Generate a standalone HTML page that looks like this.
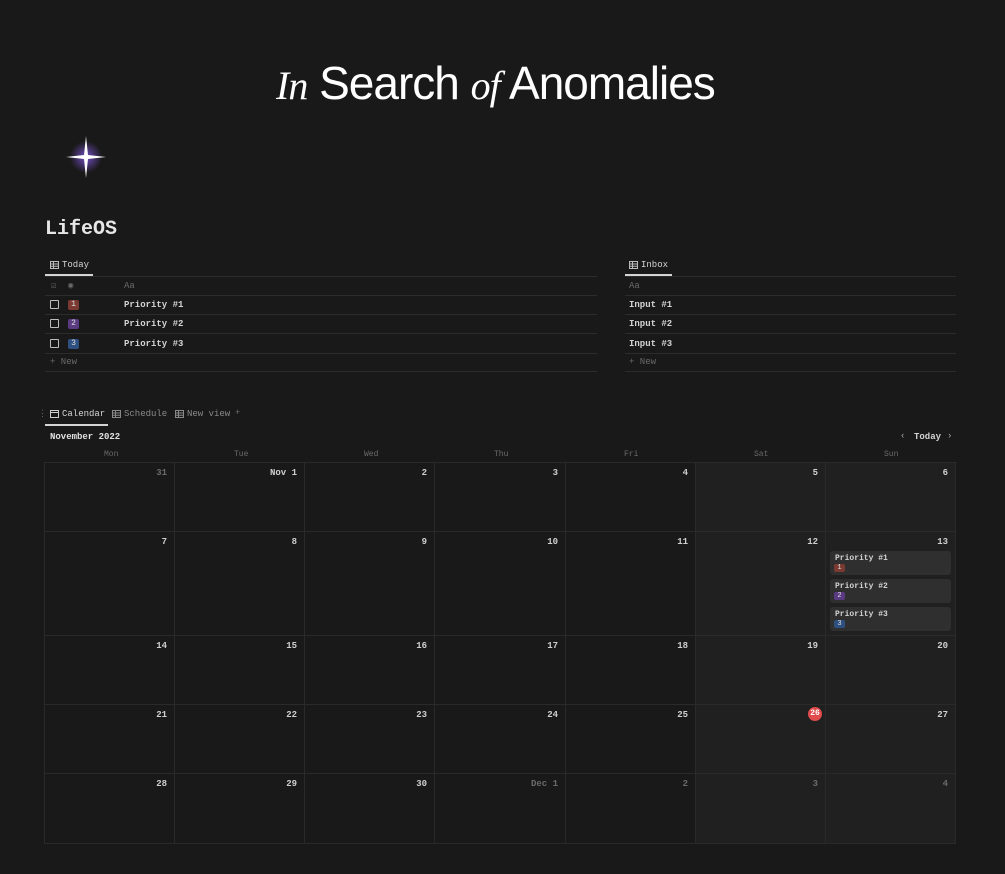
<!DOCTYPE html>
<html><head><meta charset="utf-8"><style>
*{margin:0;padding:0;box-sizing:border-box}
body{width:1005px;height:874px;background:#191919;position:relative;overflow:hidden;font-family:"Liberation Mono",monospace;color:#d4d4d4}
.a{position:absolute}
.t{position:absolute;font-size:9px;white-space:nowrap}
.b{font-weight:bold}
.line{position:absolute;height:1px;background:#2c2c2c}
.tag{position:absolute;width:11px;height:10px;border-radius:2px;font-size:8px;text-align:center;line-height:10px;color:#e0e0e0}
.cb{position:absolute;width:9px;height:9px;border:1.5px solid #bdbdbd;border-radius:1px}
.cell{position:absolute;border-right:1px solid #2a2a2a;border-bottom:1px solid #2a2a2a}
.n{position:absolute;right:7px;top:5px;font-size:9px;font-weight:bold;color:#cfcfcf}
.g{color:#6a6a6a}
.ev{position:absolute;left:4px;right:4px;height:24px;background:#2f2f2f;border-radius:3px}
.ev span.tt{position:absolute;left:5px;top:3px;font-size:8px;font-weight:bold}
</style></head><body>
<div class="a" style="left:276px;top:56px;font-size:46px;color:#fff;font-family:'Liberation Sans',sans-serif;white-space:nowrap;letter-spacing:-1px"><span style="font-family:'Liberation Serif',serif;font-style:italic;font-size:40px">In</span> Search <span style="font-family:'Liberation Serif',serif;font-style:italic;font-size:40px">of</span> Anomalies</div>
<svg class="a" style="left:56px;top:128px" width="60" height="60" viewBox="0 0 60 60"><defs><radialGradient id="r"><stop offset="0" stop-color="#8a5cf0" stop-opacity=".8"/><stop offset="1" stop-color="#8a5cf0" stop-opacity="0"/></radialGradient></defs><circle cx="30" cy="29" r="16" fill="url(#r)"/><path d="M30 8 L32 27 L50 29 L32 31 L30 50 L28 31 L10 29 L28 27 Z" fill="#fff"/></svg>
<div class="a b" style="left:45px;top:218px;font-size:20px;color:#e6e6e6">LifeOS</div>

<!-- Today -->
<svg class="a" style="left:50px;top:261px" width="9" height="8"><rect x=".5" y=".5" width="8" height="7" fill="none" stroke="#bbb"/><path d="M.5 3H8.5M.5 5.3H8.5M3.5 .5V7.5" stroke="#bbb"/></svg>
<div class="t" style="left:62px;top:260px">Today</div>
<div class="a" style="left:45px;top:274px;width:48px;height:2px;background:#d4d4d4"></div>
<div class="line" style="left:45px;top:276px;width:552px"></div>
<div class="t g" style="left:51px;top:281px">☑</div><div class="t g" style="left:68px;top:281px">◉</div><div class="t g" style="left:124px;top:281px">Aa</div>
<div class="line" style="left:45px;top:295px;width:552px"></div>
<div class="cb" style="left:50px;top:300px"></div><div class="tag" style="left:68px;top:300px;background:#7a3a32">1</div><div class="t b" style="left:124px;top:300px">Priority #1</div>
<div class="line" style="left:45px;top:314px;width:552px"></div>
<div class="cb" style="left:50px;top:319px"></div><div class="tag" style="left:68px;top:319px;background:#5a3a80">2</div><div class="t b" style="left:124px;top:319px">Priority #2</div>
<div class="line" style="left:45px;top:333px;width:552px"></div>
<div class="cb" style="left:50px;top:339px"></div><div class="tag" style="left:68px;top:339px;background:#2e5080">3</div><div class="t b" style="left:124px;top:339px">Priority #3</div>
<div class="line" style="left:45px;top:353px;width:552px"></div>
<div class="t g" style="left:50px;top:357px">+ New</div>
<div class="line" style="left:45px;top:371px;width:552px"></div>

<!-- Inbox -->
<svg class="a" style="left:629px;top:261px" width="9" height="8"><rect x=".5" y=".5" width="8" height="7" fill="none" stroke="#bbb"/><path d="M.5 3H8.5M.5 5.3H8.5M3.5 .5V7.5" stroke="#bbb"/></svg>
<div class="t" style="left:641px;top:260px">Inbox</div>
<div class="a" style="left:625px;top:274px;width:47px;height:2px;background:#d4d4d4"></div>
<div class="line" style="left:625px;top:276px;width:331px"></div>
<div class="t g" style="left:629px;top:281px">Aa</div>
<div class="line" style="left:625px;top:295px;width:331px"></div>
<div class="t b" style="left:629px;top:300px">Input #1</div>
<div class="line" style="left:625px;top:314px;width:331px"></div>
<div class="t b" style="left:629px;top:319px">Input #2</div>
<div class="line" style="left:625px;top:333px;width:331px"></div>
<div class="t b" style="left:629px;top:339px">Input #3</div>
<div class="line" style="left:625px;top:353px;width:331px"></div>
<div class="t g" style="left:629px;top:357px">+ New</div>
<div class="line" style="left:625px;top:371px;width:331px"></div>

<!-- Calendar tabs -->
<div class="t g" style="left:38px;top:409px">⋮</div>
<svg class="a" style="left:50px;top:410px" width="9" height="8"><rect x=".5" y=".5" width="8" height="7" fill="none" stroke="#ccc"/><path d="M.5 2.5H8.5" stroke="#ccc"/></svg>
<div class="t" style="left:62px;top:409px">Calendar</div>
<div class="a" style="left:45px;top:424px;width:63px;height:2px;background:#d4d4d4"></div>
<svg class="a" style="left:112px;top:410px" width="9" height="8"><rect x=".5" y=".5" width="8" height="7" fill="none" stroke="#888"/><path d="M.5 3H8.5M.5 5.3H8.5M3.5 .5V7.5" stroke="#888"/></svg>
<div class="t" style="left:124px;top:409px;color:#8a8a8a">Schedule</div>
<svg class="a" style="left:175px;top:410px" width="9" height="8"><rect x=".5" y=".5" width="8" height="7" fill="none" stroke="#888"/><path d="M.5 3H8.5M.5 5.3H8.5M3.5 .5V7.5" stroke="#888"/></svg>
<div class="t" style="left:187px;top:409px;color:#8a8a8a">New view</div>
<div class="t g" style="left:235px;top:408px">+</div>
<div class="t b" style="left:50px;top:432px;color:#e0e0e0">November 2022</div>
<div class="t" style="left:900px;top:431px;color:#aaa">‹</div>
<div class="t b" style="left:914px;top:432px">Today</div>
<div class="t" style="left:947px;top:431px;color:#aaa">›</div>

<div class="t g" style="left:104px;top:450px;font-size:8px">Mon</div>
<div class="t g" style="left:234px;top:450px;font-size:8px">Tue</div>
<div class="t g" style="left:364px;top:450px;font-size:8px">Wed</div>
<div class="t g" style="left:494px;top:450px;font-size:8px">Thu</div>
<div class="t g" style="left:624px;top:450px;font-size:8px">Fri</div>
<div class="t g" style="left:754px;top:450px;font-size:8px">Sat</div>
<div class="t g" style="left:884px;top:450px;font-size:8px">Sun</div>

<div class="a" style="left:44px;top:462px;width:913px;height:382px;border-left:1px solid #2a2a2a;border-top:1px solid #2a2a2a"></div>
<div class="a" style="left:696px;top:463px;width:260px;height:380px;background:#202020"></div>

<div class="cell" style="left:45px;top:463px;width:130px;height:69px"><span class="n g">31</span></div>
<div class="cell" style="left:175px;top:463px;width:130px;height:69px"><span class="n">Nov 1</span></div>
<div class="cell" style="left:305px;top:463px;width:130px;height:69px"><span class="n">2</span></div>
<div class="cell" style="left:435px;top:463px;width:131px;height:69px"><span class="n">3</span></div>
<div class="cell" style="left:566px;top:463px;width:130px;height:69px"><span class="n">4</span></div>
<div class="cell" style="left:696px;top:463px;width:130px;height:69px"><span class="n">5</span></div>
<div class="cell" style="left:826px;top:463px;width:130px;height:69px"><span class="n">6</span></div>

<div class="cell" style="left:45px;top:532px;width:130px;height:104px"><span class="n">7</span></div>
<div class="cell" style="left:175px;top:532px;width:130px;height:104px"><span class="n">8</span></div>
<div class="cell" style="left:305px;top:532px;width:130px;height:104px"><span class="n">9</span></div>
<div class="cell" style="left:435px;top:532px;width:131px;height:104px"><span class="n">10</span></div>
<div class="cell" style="left:566px;top:532px;width:130px;height:104px"><span class="n">11</span></div>
<div class="cell" style="left:696px;top:532px;width:130px;height:104px"><span class="n">12</span></div>
<div class="cell" style="left:826px;top:532px;width:130px;height:104px"><span class="n">13</span>
<div class="ev" style="top:19px"><span class="tt">Priority #1</span><div class="tag" style="left:4px;top:13px;height:8px;line-height:8px;font-size:7px;background:#7a3a32">1</div></div>
<div class="ev" style="top:47px"><span class="tt">Priority #2</span><div class="tag" style="left:4px;top:13px;height:8px;line-height:8px;font-size:7px;background:#5a3a80">2</div></div>
<div class="ev" style="top:75px"><span class="tt">Priority #3</span><div class="tag" style="left:4px;top:13px;height:8px;line-height:8px;font-size:7px;background:#2e5080">3</div></div>
</div>

<div class="cell" style="left:45px;top:636px;width:130px;height:69px"><span class="n">14</span></div>
<div class="cell" style="left:175px;top:636px;width:130px;height:69px"><span class="n">15</span></div>
<div class="cell" style="left:305px;top:636px;width:130px;height:69px"><span class="n">16</span></div>
<div class="cell" style="left:435px;top:636px;width:131px;height:69px"><span class="n">17</span></div>
<div class="cell" style="left:566px;top:636px;width:130px;height:69px"><span class="n">18</span></div>
<div class="cell" style="left:696px;top:636px;width:130px;height:69px"><span class="n">19</span></div>
<div class="cell" style="left:826px;top:636px;width:130px;height:69px"><span class="n">20</span></div>

<div class="cell" style="left:45px;top:705px;width:130px;height:69px"><span class="n">21</span></div>
<div class="cell" style="left:175px;top:705px;width:130px;height:69px"><span class="n">22</span></div>
<div class="cell" style="left:305px;top:705px;width:130px;height:69px"><span class="n">23</span></div>
<div class="cell" style="left:435px;top:705px;width:131px;height:69px"><span class="n">24</span></div>
<div class="cell" style="left:566px;top:705px;width:130px;height:69px"><span class="n">25</span></div>
<div class="cell" style="left:696px;top:705px;width:130px;height:69px"><span class="n" style="right:3px;top:2px;width:14px;height:14px;border-radius:7px;background:#e04b4b;color:#fff;text-align:center;line-height:14px;font-size:8px">26</span></div>
<div class="cell" style="left:826px;top:705px;width:130px;height:69px"><span class="n">27</span></div>

<div class="cell" style="left:45px;top:774px;width:130px;height:70px"><span class="n">28</span></div>
<div class="cell" style="left:175px;top:774px;width:130px;height:70px"><span class="n">29</span></div>
<div class="cell" style="left:305px;top:774px;width:130px;height:70px"><span class="n">30</span></div>
<div class="cell" style="left:435px;top:774px;width:131px;height:70px"><span class="n g">Dec 1</span></div>
<div class="cell" style="left:566px;top:774px;width:130px;height:70px"><span class="n g">2</span></div>
<div class="cell" style="left:696px;top:774px;width:130px;height:70px"><span class="n g">3</span></div>
<div class="cell" style="left:826px;top:774px;width:130px;height:70px"><span class="n g">4</span></div>
</body></html>
